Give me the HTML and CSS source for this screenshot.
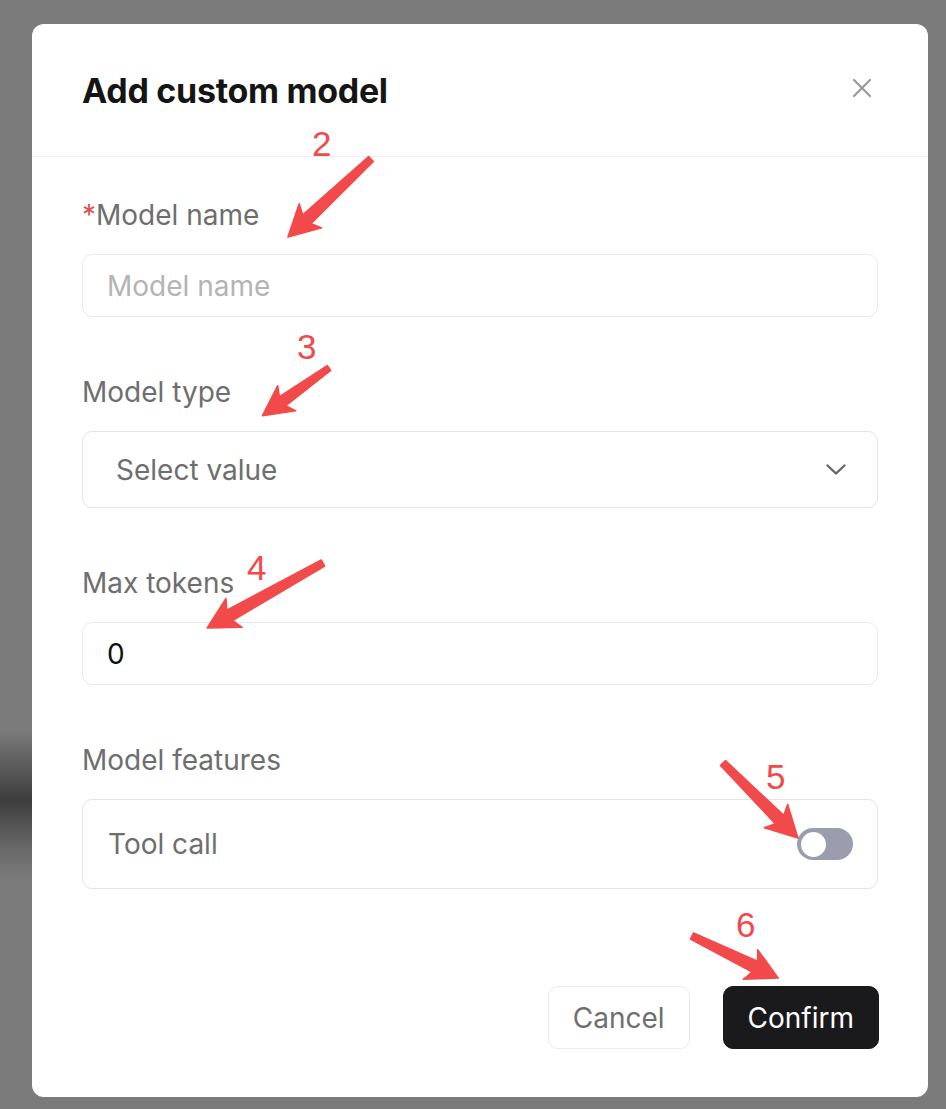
FILE: index.html
```html
<!DOCTYPE html>
<html lang="en">
<head>
<meta charset="utf-8">
<title>Add custom model</title>
<link rel="stylesheet" href="styles.css">
</head>
<body>
<div class="backdrop">
  <div class="modal">
    <header class="modal-header">
      <h1 class="modal-title">Add custom model</h1>
      <button class="close-btn" aria-label="Close">
        <svg width="20" height="20" viewBox="0 0 20 20"><path d="M2 2 L18 18 M18 2 L2 18" stroke="#9a9a9a" stroke-width="2.2" stroke-linecap="round" fill="none"/></svg>
      </button>
    </header>
    <div class="modal-body">
      <div class="field">
        <label class="field-label"><span class="req">*</span>Model name</label>
        <div class="input"><span class="placeholder">Model name</span></div>
      </div>
      <div class="field">
        <label class="field-label">Model type</label>
        <div class="select">
          <span class="select-value">Select value</span>
          <svg class="chevron" width="20" height="11" viewBox="0 0 20 11"><path d="M1.5 1.5 L10 9.5 L18.5 1.5" stroke="#666" stroke-width="2.4" stroke-linecap="round" stroke-linejoin="round" fill="none"/></svg>
        </div>
      </div>
      <div class="field">
        <label class="field-label">Max tokens</label>
        <div class="input"><span class="value">0</span></div>
      </div>
      <div class="field">
        <label class="field-label">Model features</label>
        <div class="feature-box">
          <span class="feature-name">Tool call</span>
          <span class="toggle"><span class="knob"></span></span>
        </div>
      </div>
    </div>
    <footer class="modal-footer">
      <button class="btn btn-cancel">Cancel</button>
      <button class="btn btn-confirm">Confirm</button>
    </footer>
  </div>
</div>
<svg class="annotations" width="946" height="1109" viewBox="0 0 946 1109">
  <g fill="#f24a4a" stroke="#f24a4a" stroke-width="1.5" stroke-linejoin="round">
    <path transform="translate(371,159) rotate(136.8)" d="M0,-3.5 L88,-6 L83,-16.5 L114,0 L83,16.5 L88,6 L0,3.5 Z"/>
    <path transform="translate(329,368) rotate(144.4)" d="M0,-3 L57,-5.5 L52,-15.5 L82,0 L52,15.5 L57,5.5 L0,3 Z"/>
    <path transform="translate(323,563) rotate(150.7)" d="M0,-3.5 L107,-6 L102,-16.5 L133,0 L102,16.5 L107,6 L0,3.5 Z"/>
    <path transform="translate(723,763) rotate(45)" d="M0,-3.5 L80,-6 L75,-16.5 L106,0 L75,16.5 L80,6 L0,3.5 Z"/>
    <path transform="translate(692,936) rotate(26)" d="M0,-3.5 L70,-6 L65,-16.5 L96,0 L65,16.5 L70,6 L0,3.5 Z"/>
  </g>
  <g class="anno-num" fill="#f24a4a">
    <text x="312" y="156">2</text>
    <text x="297" y="359">3</text>
    <text x="247" y="580">4</text>
    <text x="766" y="789">5</text>
    <text x="736" y="937">6</text>
  </g>
</svg>
</body>
</html>
```
FILE: styles.css
```css
* { box-sizing: border-box; }

html, body {
  margin: 0;
  padding: 0;
}

body {
  width: 946px;
  height: 1109px;
  overflow: hidden;
  position: relative;
  font-family: "Inter", "Noto Sans", sans-serif;
  background:
    linear-gradient(to bottom, #7b7b7b 0, #7b7b7b 730px, #3d3d3d 800px, #6a6a6a 850px, #7b7b7b 880px) left top / 32px 100% no-repeat,
    #7b7b7b;
}

.backdrop {
  padding: 24px 18px 0 32px;
}

.modal {
  width: 896px;
  background: #fff;
  border-radius: 12px;
}

.modal-header {
  height: 133px;
  display: flex;
  align-items: center;
  justify-content: space-between;
  padding: 0 56px 0 50px;
  border-bottom: 1px solid #efefef;
}

.modal-title {
  margin: 0;
  font-size: 34px;
  font-weight: 700;
  letter-spacing: -0.3px;
  color: #151515;
}

.close-btn {
  border: 0;
  background: none;
  padding: 0;
  width: 20px;
  height: 20px;
  display: flex;
  margin-top: -4px;
}

.modal-body {
  padding: 40px 50px 0;
  display: flex;
  flex-direction: column;
  gap: 57px;
}

.field {
  display: flex;
  flex-direction: column;
}

.field-label {
  font-size: 28px;
  line-height: 36px;
  color: #6e6e6e;
  margin-bottom: 21px;
}

.req {
  color: #d9534f;
}

.input {
  height: 63px;
  border: 1.5px solid #e9e9e9;
  border-radius: 10px;
  display: flex;
  align-items: center;
  padding: 0 24px;
  font-size: 28px;
}

.placeholder { color: #b4b4b4; }
.value { color: #111; }

.select {
  height: 77px;
  border: 1.5px solid #e4e4e4;
  border-radius: 10px;
  display: flex;
  align-items: center;
  justify-content: space-between;
  padding: 0 31px 0 33px;
  font-size: 28px;
  color: #6e6e6e;
}

.chevron { display: block; }

.feature-box {
  height: 90px;
  border: 1.5px solid #e4e4e4;
  border-radius: 10px;
  display: flex;
  align-items: center;
  justify-content: space-between;
  padding: 0 24px 0 25px;
  font-size: 28px;
  color: #6e6e6e;
}

.toggle {
  width: 56px;
  height: 32px;
  border-radius: 16px;
  background: #9a9dae;
  display: flex;
  align-items: center;
  padding-left: 3.5px;
}

.knob {
  width: 25px;
  height: 25px;
  border-radius: 50%;
  background: #fff;
}

.modal-footer {
  display: flex;
  justify-content: flex-end;
  gap: 33px;
  padding: 97px 49px 48px;
}

.btn {
  height: 63px;
  padding: 0 24px;
  border-radius: 10px;
  font-family: "Inter", "Noto Sans", sans-serif;
  font-size: 28px;
}

.btn-cancel {
  background: #fff;
  border: 1.5px solid #ebebeb;
  color: #6f6f6f;
}

.btn-confirm {
  background: #1a1a1c;
  border: 1px solid #1a1a1c;
  color: #fff;
}

.annotations {
  position: absolute;
  left: 0;
  top: 0;
  pointer-events: none;
}

.anno-num text {
  font-family: "Liberation Sans", "DejaVu Sans", sans-serif;
  font-size: 35px;
}
```
